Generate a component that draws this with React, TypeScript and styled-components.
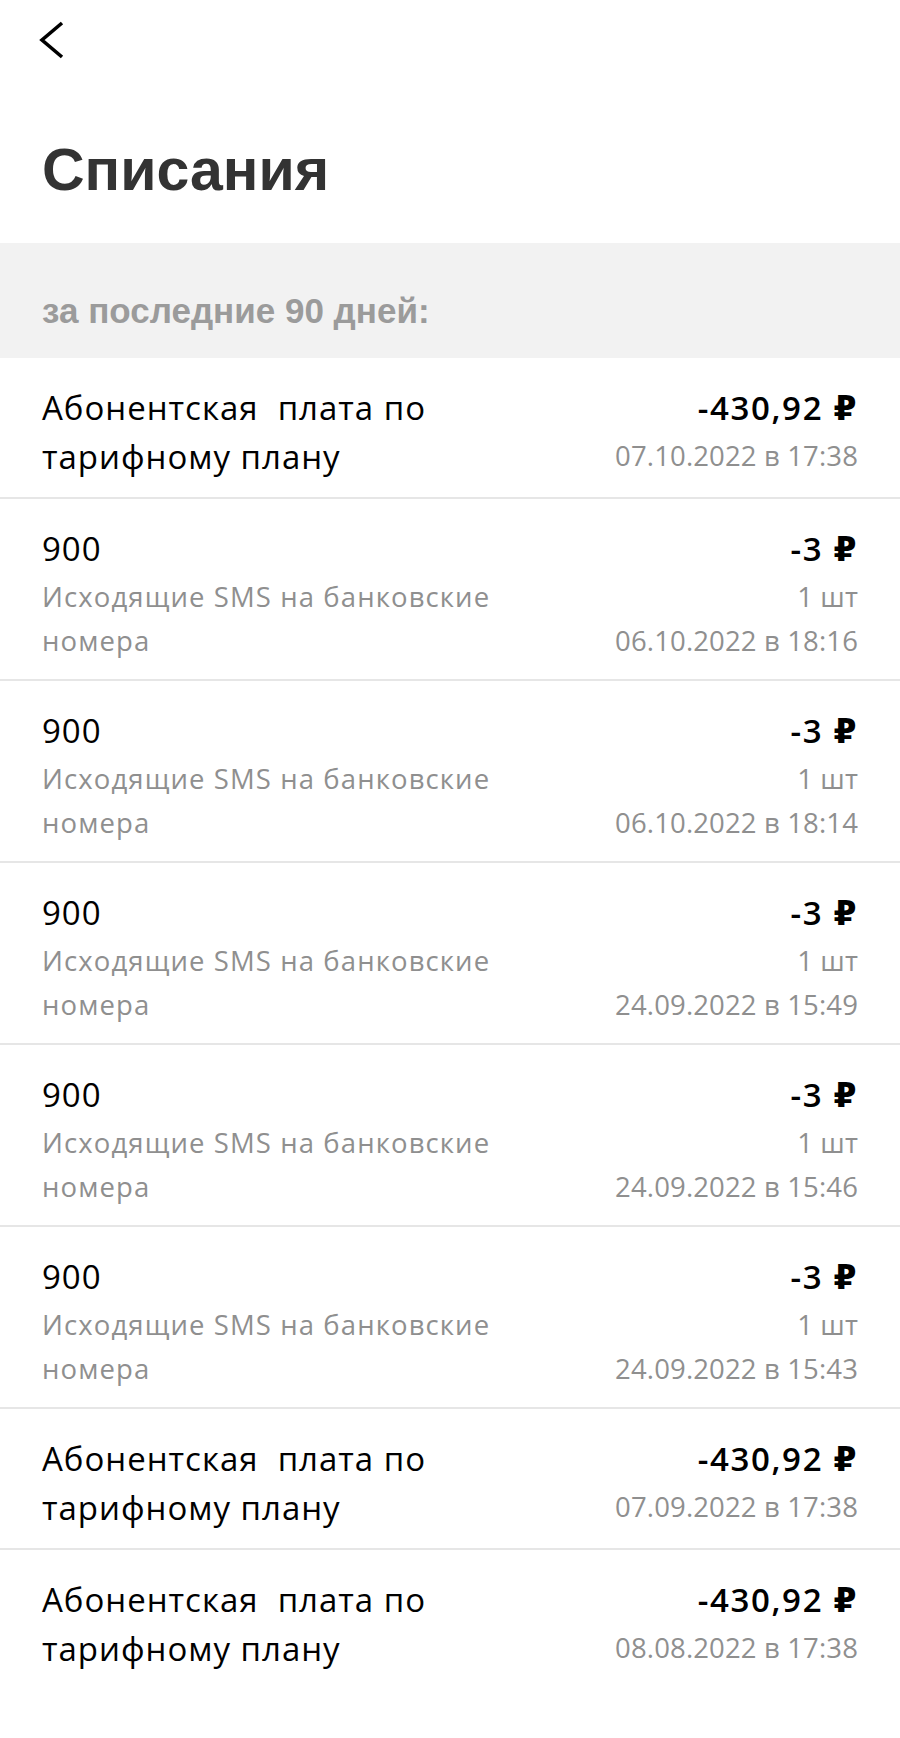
import styled, { createGlobalStyle } from 'styled-components'

type Charge = {
    title: string[]
    sub?: string[]
    amount: string
    meta: string[]
}

const SMS = ['Исходящие SMS на банковские', 'номера']
const FEE = ['Абонентская\u00a0 плата по', 'тарифному плану']

const Charges: Charge[] = [
    { title: FEE, amount: '-430,92 ₽', meta: ['07.10.2022 в 17:38'] },
    { title: ['900'], sub: SMS, amount: '-3 ₽', meta: ['1 шт', '06.10.2022 в 18:16'] },
    { title: ['900'], sub: SMS, amount: '-3 ₽', meta: ['1 шт', '06.10.2022 в 18:14'] },
    { title: ['900'], sub: SMS, amount: '-3 ₽', meta: ['1 шт', '24.09.2022 в 15:49'] },
    { title: ['900'], sub: SMS, amount: '-3 ₽', meta: ['1 шт', '24.09.2022 в 15:46'] },
    { title: ['900'], sub: SMS, amount: '-3 ₽', meta: ['1 шт', '24.09.2022 в 15:43'] },
    { title: FEE, amount: '-430,92 ₽', meta: ['07.09.2022 в 17:38'] },
    { title: FEE, amount: '-430,92 ₽', meta: ['08.08.2022 в 17:38'] },
]

const App = () => {
    return (
        <>
            <GlobalStyle />
            <Page>
                <TopBar>
                    <BackButton aria-label='назад'>
                        <svg width='26' height='40' viewBox='0 0 26 40'>
                            <polyline
                                points='24,2 4,19 24,36'
                                fill='none'
                                stroke='#000'
                                strokeWidth='3.6'
                                strokeLinecap='butt'
                            />
                        </svg>
                    </BackButton>
                </TopBar>
                <Titulo>Списания</Titulo>
                <Periodo>за последние 90 дней:</Periodo>
                <Lista>
                    {Charges.map((item, index) => (
                        <Linha key={index}>
                            <Coluna>
                                {item.title.map((t, i) => (
                                    <Principal key={i}>{t}</Principal>
                                ))}
                                {item.sub && (
                                    <Bloco>
                                        {item.sub.map((t, i) => (
                                            <Secundario key={i}>{t}</Secundario>
                                        ))}
                                    </Bloco>
                                )}
                            </Coluna>
                            <Coluna $right>
                                <Valor>{item.amount}</Valor>
                                <Bloco>
                                    {item.meta.map((t, i) => (
                                        <Secundario key={i} $meta>
                                            {t}
                                        </Secundario>
                                    ))}
                                </Bloco>
                            </Coluna>
                        </Linha>
                    ))}
                </Lista>
            </Page>
        </>
    )
}

export default App

const GlobalStyle = createGlobalStyle`
    body {
        margin: 0;
        background: #fff;
        font-family: 'Open Sans', 'DejaVu Sans', sans-serif;
    }
`

const Page = styled.div`
    width: 900px;
    min-height: 1738px;
    background: #fff;
`

const TopBar = styled.div`
    height: 80px;
    box-sizing: border-box;
    padding: 21px 0 0 38px;
`

const BackButton = styled.button`
    display: block;
    padding: 0;
    border: none;
    background: none;
    cursor: pointer;
`

const Titulo = styled.h1`
    margin: 55px 0 38px;
    padding: 0 42px;
    height: 70px;
    font-family: 'Liberation Sans', Arial, sans-serif;
    font-weight: 700;
    font-size: 59px;
    line-height: 70px;
    color: #333;
`

const Periodo = styled.div`
    height: 115px;
    box-sizing: border-box;
    padding: 46px 42px 0;
    background: #f2f2f2;
    font-family: 'Liberation Sans', Arial, sans-serif;
    font-weight: 700;
    font-size: 35px;
    line-height: 44px;
    color: #9b9b9b;
`

const Lista = styled.ul`
    list-style: none;
    margin: 0;
    padding: 0;
`

const Linha = styled.li`
    display: flex;
    justify-content: space-between;
    padding: 25px 42px 16px;
    border-bottom: 2px solid #e6e6e6;

    &:last-child {
        border-bottom: none;
    }
`

const Coluna = styled.div<{ $right?: boolean }>`
    display: flex;
    flex-direction: column;
    align-items: ${(p) => (p.$right ? 'flex-end' : 'flex-start')};
    text-align: ${(p) => (p.$right ? 'right' : 'left')};
`

const Principal = styled.div`
    font-size: 33px;
    line-height: 49px;
    letter-spacing: 0.03em;
    color: #000;
    white-space: pre;
`

const Valor = styled(Principal)`
    font-weight: 600;
    letter-spacing: 0.05em;
`

const Bloco = styled.div`
    margin-top: 2px;
`

const Secundario = styled.div<{ $meta?: boolean }>`
    font-size: 27.5px;
    line-height: 44px;
    letter-spacing: ${(p) => (p.$meta ? '0.005em' : '0.04em')};
    color: #8f8f8f;
    white-space: pre;
`
